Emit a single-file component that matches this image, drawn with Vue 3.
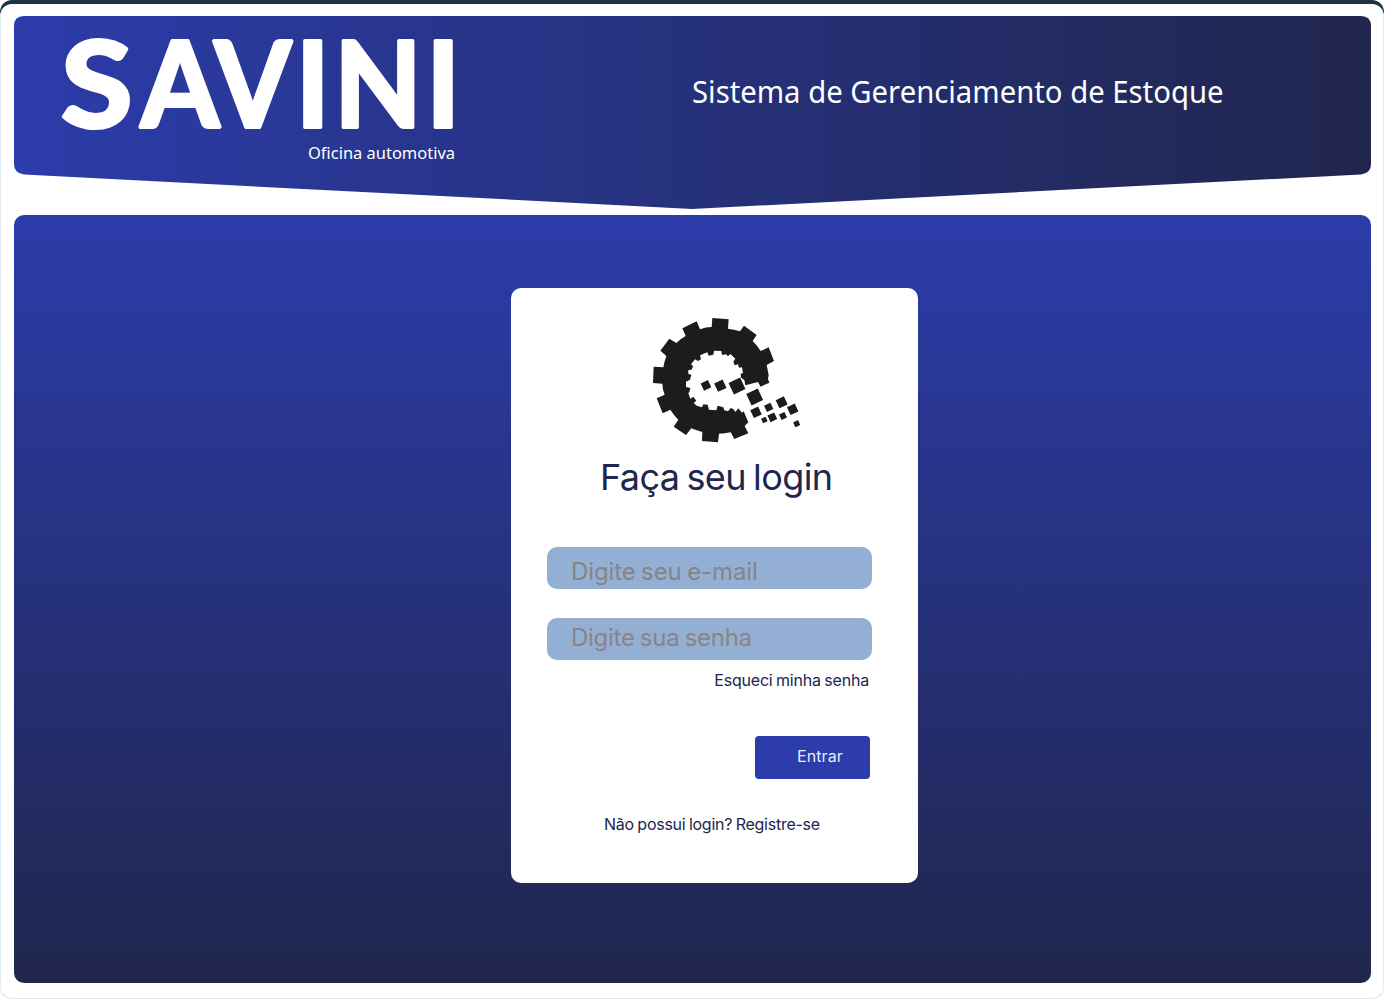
<script setup>
const letters = [
  { c: 'S', x: 61, w: 71.5 },
  { c: 'A', x: 141, w: 78 },
  { c: 'V', x: 214.5, w: 76.5 },
  { c: 'I', x: 296, w: 33.5 },
  { c: 'N', x: 334.5, w: 87 },
  { c: 'I', x: 426.5, w: 33.5 },
]

const pieces = [
  [198, 241, 24], [241, 242, 28], [291, 243, 38], [344, 276, 38],
  [348, 322, 26], [386, 307, 21], [425, 292, 27], [458, 313, 26],
  [373, 345, 15], [397, 337, 22], [429, 333, 18], [470, 356, 16],
]
</script>

<template>
  <div class="backdrop">
    <main class="page">
      <header class="header">
        <svg class="header-art" viewBox="0 0 1357 193" width="1357" height="193">
          <defs>
            <linearGradient id="bar" x1="0" y1="0" x2="1" y2="0">
              <stop offset="0" stop-color="#2c3caa" />
              <stop offset="1" stop-color="#20264d" />
            </linearGradient>
          </defs>
          <path d="M10 0H1347Q1357 0 1357 10V148Q1357 157.5 1347 158.5L678 193L10 158.5Q0 157.5 0 148V10Q0 0 10 0Z" fill="url(#bar)" />
          <g class="wordmark" transform="translate(-14 -16)">
            <text v-for="(l, i) in letters" :key="i" :x="l.x" y="126.8" :textLength="l.w" lengthAdjust="spacingAndGlyphs">{{ l.c }}</text>
          </g>
          <text class="tagline" x="294" y="143" textLength="147" lengthAdjust="spacingAndGlyphs">Oficina automotiva</text>
          <text class="system" x="678" y="87" textLength="531.5" lengthAdjust="spacingAndGlyphs">Sistema de Gerenciamento de Estoque</text>
        </svg>
      </header>
      <section class="stage">
        <form class="card" @submit.prevent>
          <svg class="gear" viewBox="0 0 510 450" width="170" height="150">
            <g fill="#1c1c1c">
              <path d="M217 39L266 43L264 71Q282 73 300 79L312 62L350 90L338 108Q352 122 362 138L386 127L402 168L380 180L386 211L384 222L388 233L362 245L354 231L316 241L313 225L303 218L302 206L309 204L306 187L297 188L294 178L284 181L280 170L286 161L271 147L264 154L258 148L246 150L244 138L222 137L220 149L206 152L202 142L180 151L183 163L174 168L165 163L153 178L159 184L155 194L145 195L145 207L154 209L150 224L138 230L138 246L151 249L149 259L145 265L151 281L160 275L169 287L161 294L170 302L186 307L190 298L203 299L207 314L229 316L233 302L250 307L253 316L264 319L272 309L280 312L286 321L295 310L306 323L311 319L325 352L314 363L325 385L283 402L272 382Q254 386 237 386L234 412L186 408L187 381Q170 377 154 370L138 390L101 365L115 344Q100 329 91 314L68 325L50 280L74 269Q67 253 67 236L39 234L41 185L70 187Q73 170 79 153L61 137L88 101L109 114Q122 101 137 93L127 70L170 49L180 73Q198 66 215 66Z" />
              <rect v-for="(p, i) in pieces" :key="i" :x="p[0] - p[2] / 2" :y="p[1] - p[2] / 2" :width="p[2]" :height="p[2]" :transform="`rotate(-25 ${p[0]} ${p[1]})`" />
            </g>
          </svg>
          <h1>Faça seu login</h1>
          <div class="field email"><span>Digite seu e-mail</span></div>
          <div class="field password"><span>Digite sua senha</span></div>
          <a class="forgot">Esqueci minha senha</a>
          <button class="enter">Entrar</button>
          <p class="register">Não possui login? Registre-se</p>
        </form>
      </section>
    </main>
  </div>
</template>

<style>
body { margin: 0; background: #fff; }
</style>

<style scoped>
* { box-sizing: border-box; }
.backdrop {
  height: 999px;
  background: linear-gradient(#1c3442 0 20px, #fff 20px);
  border-radius: 12px 12px 0 0;
  padding-top: 4px;
}
.page {
  height: 995px;
  background: #fff;
  border: 1px solid #dce8f2;
  border-top: 0;
  border-radius: 12px;
  padding: 12px 12px 0 13px;
}
.header { height: 199px; }
.header-art { display: block; overflow: visible; }
.wordmark {
  font: 700 118px Lato, sans-serif;
  fill: #fff;
  stroke: #fff;
  stroke-width: 4px;
  stroke-linejoin: round;
}
.tagline { font: 400 17px "Noto Sans", sans-serif; fill: #fff; }
.system { font: 370 31px "Noto Sans", sans-serif; fill: #fff; }
.stage {
  width: 1357px;
  height: 768px;
  border-radius: 10px;
  background: linear-gradient(#2c3caa, #20264d);
  padding: 73px 0 0 497px;
}
.card {
  width: 407px;
  height: 595px;
  border-radius: 10px;
  background: #fff;
  color: #20264d;
  font-family: Inter, sans-serif;
  display: flex;
  flex-direction: column;
  padding: 17px 46px 0 36px;
  white-space: nowrap;
}
.gear { margin-left: 93px; flex: none; }
h1 {
  margin: 0 0 0 53px;
  height: 92px;
  font-size: 36px;
  line-height: 44px;
  font-weight: 400;
  letter-spacing: -0.6px;
  word-spacing: -2.4px;
}
.field {
  width: 325px;
  height: 42px;
  flex: none;
  border-radius: 10px;
  background: #93b0d4;
  color: #858585;
  font-size: 24px;
  line-height: 30px;
  padding-left: 24px;
  letter-spacing: -0.1px;
  word-spacing: -1.2px;
}
.email { padding-top: 10px; }
.password { margin-top: 29px; padding-top: 5px; color: #8b8385; letter-spacing: -0.28px; }
.forgot {
  align-self: flex-end;
  margin: 10px 3px 0 0;
  font-size: 16px;
  line-height: 20px;
  letter-spacing: -0.2px;
  word-spacing: -0.8px;
}
.enter {
  align-self: flex-end;
  margin: 46px 2px 0 0;
  flex: none;
  width: 115px;
  height: 43px;
  border: 0;
  border-radius: 4px;
  background: #2c3caa;
  color: #e9ebf8;
  font: 400 16px/20px Inter, sans-serif;
  letter-spacing: 0.1px;
  padding: 0 0 3px 42px;
  text-align: left;
}
.register {
  margin: 35px 0 0 57px;
  font-size: 16px;
  line-height: 20px;
  letter-spacing: -0.25px;
  word-spacing: -0.8px;
}
</style>
